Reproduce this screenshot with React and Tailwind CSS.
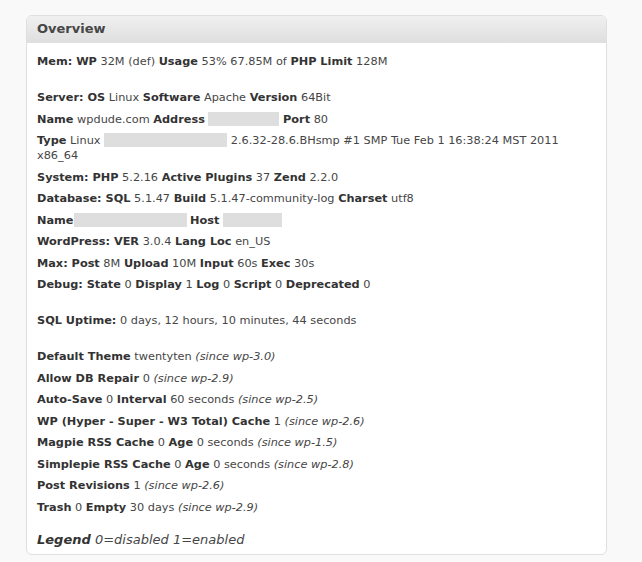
const B = ({ children }) => <b className="font-bold text-[#333]">{children}</b>;
const I = ({ children }) => <i className="italic">{children}</i>;
const Hide = ({ w }) => (
  <span className="inline-block h-[14px] align-[-3px] bg-[#dedede]" style={{ width: w }} />
);

function Row({ children, gap }) {
  return (
    <p className={`leading-[15px] mb-[6.5px] ${gap ? "mt-[21px]" : ""}`}>{children}</p>
  );
}

export default function App() {
  return (
    <div className="min-h-[562px] bg-[#f9f9f9] pt-[15px] pl-[26px] pr-[35px] pb-2 text-[11.3px] text-[#464646]" style={{ fontFamily: '"DejaVu Sans", Verdana, sans-serif' }}>
      <div className="w-[581px] bg-white border border-[#dfdfdf] rounded-[6px] overflow-hidden">
        <div className="h-[27px] bg-gradient-to-b from-[#f0f0f0] to-[#dfdfdf] border-b border-[#dfdfdf] px-[10px] flex items-center">
          <h3 className="text-[13px] font-bold text-[#464646]">Overview</h3>
        </div>
        <div className="px-[10px] pt-[11px] pb-[5px]">
          <Row><B>Mem: WP</B> 32M (def) <B>Usage</B> 53% 67.85M of <B>PHP Limit</B> 128M</Row>
          <Row gap><B>Server: OS</B> Linux <B>Software</B> Apache <B>Version</B> 64Bit</Row>
          <Row><B>Name</B> wpdude.com <B>Address</B> <Hide w={71} /> <B>Port</B> 80</Row>
          <Row><B>Type</B> Linux <Hide w={123} /> 2.6.32-28.6.BHsmp #1 SMP Tue Feb 1 16:38:24 MST 2011 x86_64</Row>
          <Row><B>System: PHP</B> 5.2.16 <B>Active Plugins</B> 37 <B>Zend</B> 2.2.0</Row>
          <Row><B>Database: SQL</B> 5.1.47 <B>Build</B> 5.1.47-community-log <B>Charset</B> utf8</Row>
          <Row><B>Name</B><Hide w={113} /> <B>Host</B> <Hide w={59} /></Row>
          <Row><B>WordPress: VER</B> 3.0.4 <B>Lang Loc</B> en_US</Row>
          <Row><B>Max: Post</B> 8M <B>Upload</B> 10M <B>Input</B> 60s <B>Exec</B> 30s</Row>
          <Row><B>Debug: State</B> 0 <B>Display</B> 1 <B>Log</B> 0 <B>Script</B> 0 <B>Deprecated</B> 0</Row>
          <Row gap><B>SQL Uptime:</B> 0 days, 12 hours, 10 minutes, 44 seconds</Row>
          <Row gap><B>Default Theme</B> twentyten <I>(since wp-3.0)</I></Row>
          <Row><B>Allow DB Repair</B> 0 <I>(since wp-2.9)</I></Row>
          <Row><B>Auto-Save</B> 0 <B>Interval</B> 60 seconds <I>(since wp-2.5)</I></Row>
          <Row><B>WP (Hyper - Super - W3 Total) Cache</B> 1 <I>(since wp-2.6)</I></Row>
          <Row><B>Magpie RSS Cache</B> 0 <B>Age</B> 0 seconds <I>(since wp-1.5)</I></Row>
          <Row><B>Simplepie RSS Cache</B> 0 <B>Age</B> 0 seconds <I>(since wp-2.8)</I></Row>
          <Row><B>Post Revisions</B> 1 <I>(since wp-2.6)</I></Row>
          <Row><B>Trash</B> 0 <B>Empty</B> 30 days <I>(since wp-2.9)</I></Row>
          <p className="mt-[16px] text-[13px] italic leading-[18px]"><B>Legend</B> 0=disabled 1=enabled</p>
        </div>
      </div>
    </div>
  );
}
